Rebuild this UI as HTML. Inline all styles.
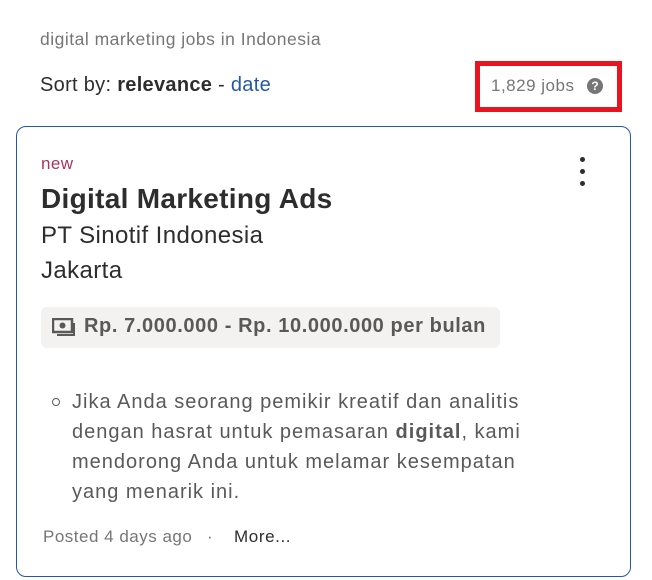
<!DOCTYPE html>
<html><head><meta charset="utf-8"><style>
*{margin:0;padding:0;box-sizing:border-box}
body{width:652px;height:580px;background:#fff;font-family:"Liberation Sans",sans-serif;position:relative;overflow:hidden;color:#2d2d2d}
.a{position:absolute;white-space:nowrap}
</style></head><body>
<div class="a" style="left:40px;top:29px;font-size:17.5px;color:#767676;letter-spacing:0.5px">digital marketing jobs in Indonesia</div>
<div class="a" style="left:40px;top:74px;font-size:20px;color:#2d2d2d;letter-spacing:0.3px">Sort by: <b>relevance</b> - <span style="color:#2557a7">date</span></div>
<div class="a" style="left:475px;top:61px;width:147px;height:51px;border:5px solid #e8141f"></div>
<div class="a" style="left:491px;top:76px;font-size:17px;color:#767676;letter-spacing:0.5px">1,829 jobs</div>
<div class="a" style="left:587px;top:78px;width:16px;height:16px;border-radius:50%;background:#767676;color:#fff;font-size:12px;font-weight:bold;text-align:center;line-height:16px">?</div>
<div class="a" style="left:16px;top:126px;width:615px;height:451px;border:1px solid #2557a7;border-radius:10px"></div>
<div class="a" style="left:41px;top:154px;font-size:17px;color:#a3385a;letter-spacing:0.4px">new</div>
<div class="a" style="left:580px;top:157px;width:5px;height:5px;border-radius:50%;background:#2d2d2d"></div>
<div class="a" style="left:580px;top:169px;width:5px;height:5px;border-radius:50%;background:#2d2d2d"></div>
<div class="a" style="left:580px;top:181px;width:5px;height:5px;border-radius:50%;background:#2d2d2d"></div>
<div class="a" style="left:41px;top:183px;font-size:28px;font-weight:bold;color:#2d2d2d;letter-spacing:0.3px">Digital Marketing Ads</div>
<div class="a" style="left:41px;top:222px;font-size:24px;color:#2d2d2d;letter-spacing:0.4px">PT Sinotif Indonesia</div>
<div class="a" style="left:41px;top:257px;font-size:24px;color:#2d2d2d;letter-spacing:0.4px">Jakarta</div>
<div class="a" style="left:41px;top:307px;width:459px;height:41px;background:#f3f2f1;border-radius:6px"></div>
<svg class="a" style="left:52px;top:318px" width="24" height="20" viewBox="0 0 24 20"><rect x="1" y="1" width="19" height="13" fill="none" stroke="#595959" stroke-width="2.5"/><circle cx="10.5" cy="7.5" r="3" fill="#595959"/><path d="M22 5v12H5" fill="none" stroke="#595959" stroke-width="2"/></svg>
<div class="a" style="left:84px;top:315px;font-size:20px;font-weight:bold;color:#595959;letter-spacing:0.6px">Rp. 7.000.000 - Rp. 10.000.000 per bulan</div>
<div class="a" style="left:52px;top:398px;width:8px;height:8px;border:1px solid #595959;border-radius:50%"></div>
<div class="a" style="left:72px;top:387px;font-size:20px;line-height:30px;color:#595959;letter-spacing:1px">Jika Anda seorang pemikir kreatif dan analitis<br>dengan hasrat untuk pemasaran <b>digital</b>, kami<br>mendorong Anda untuk melamar kesempatan<br>yang menarik ini.</div>
<div class="a" style="left:43px;top:527px;font-size:17px;color:#767676;letter-spacing:0.5px">Posted 4 days ago</div>
<div class="a" style="left:207px;top:527px;font-size:17px;color:#767676">·</div>
<div class="a" style="left:234px;top:527px;font-size:17px;color:#2d2d2d;letter-spacing:0.6px">More...</div>
</body></html>
